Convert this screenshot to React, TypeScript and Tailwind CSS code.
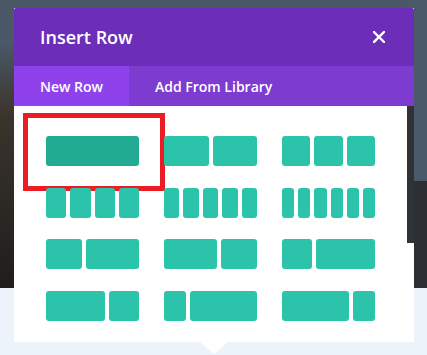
import type { ReactNode } from "react";

// each layout is a list of column ratios
const layouts: number[][] = [
    [1],
    [1, 1],
    [1, 1, 1],
    [1, 1, 1, 1],
    [1, 1, 1, 1, 1],
    [1, 1, 1, 1, 1, 1],
    [2, 3],
    [3, 2],
    [1, 2],
    [2, 1],
    [1, 3],
    [3, 1],
];

const CloseIcon = () => (
    <svg width="12" height="12" viewBox="0 0 12 12" fill="none">
        <path
            d="M1 1L11 11M11 1L1 11"
            stroke="white"
            strokeWidth="2.4"
            strokeLinecap="square"
        />
    </svg>
);

const LayoutCell = ({
    cols,
    selected,
}: {
    cols: number[];
    selected?: boolean;
}) => (
    <div className="relative flex h-[30px] w-[93px] gap-[4px]">
        {cols.map((c, i) => (
            <div
                key={i}
                className={
                    selected
                        ? "h-full rounded-[3px] bg-[#22ab93]"
                        : "h-full rounded-[3px] bg-[#2bc4aa]"
                }
                style={{ flex: `${c} 1 0px` }}
            />
        ))}
        {selected ? (
            <div className="absolute -left-[23px] -right-[26px] -top-[23px] -bottom-[25px] border-[5px] border-[#ec1c24]" />
        ) : null}
    </div>
);

const Side = ({ children }: { children: ReactNode }) => (
    <div className="flex flex-col">{children}</div>
);

const App = () => {
    return (
        <div
            className="flex h-[355px] w-[427px] overflow-hidden bg-[#edf3fb]"
            style={{ fontFamily: '"Open Sans", "Liberation Sans", sans-serif' }}
        >
            <Side>
                <div className="h-[288px] w-[14px] bg-gradient-to-b from-[#4a5868] from-15% via-[#3b342c] via-40% to-[#1f1e1d]" />
            </Side>

            <div className="flex w-[400px] flex-col">
                <div className="h-[8px] bg-[#4a5868]" />
                <div className="flex flex-col overflow-hidden rounded-t-[2px] bg-white">
                    <div className="flex h-[58px] items-center justify-between bg-[#6c2eb9] pl-[26px] pr-[29px]">
                        <p className="text-[18px] font-semibold text-white">
                            Insert Row
                        </p>
                        <CloseIcon />
                    </div>
                    <div className="flex h-[40px] bg-[#7e3bd0] text-[14px] font-semibold text-white">
                        <div className="flex w-[115px] items-center bg-[#8f42ec] pl-[26px]">
                            New Row
                        </div>
                        <div className="flex items-center pl-[26px]">
                            Add From Library
                        </div>
                    </div>
                    <div className="flex h-[236px]">
                        <div className="grid flex-1 grid-cols-[93px_93px_93px] content-start gap-x-[25px] gap-y-[21.7px] pl-[32px] pt-[30px]">
                            {layouts.map((cols, i) => (
                                <LayoutCell
                                    key={i}
                                    cols={cols}
                                    selected={i === 0}
                                />
                            ))}
                        </div>
                        <div className="h-[137px] w-[7px] bg-[#2f3336]" />
                    </div>
                </div>
                <div className="ml-[186px] h-0 w-0 border-l-[14px] border-r-[14px] border-t-[12px] border-l-transparent border-r-transparent border-t-white" />
            </div>

            <Side>
                <div className="h-[181px] w-[13px] bg-[#4b5a6b]" />
                <div className="h-[107px] w-[13px] bg-[#2c2f33]" />
            </Side>
        </div>
    );
};

export default App;
